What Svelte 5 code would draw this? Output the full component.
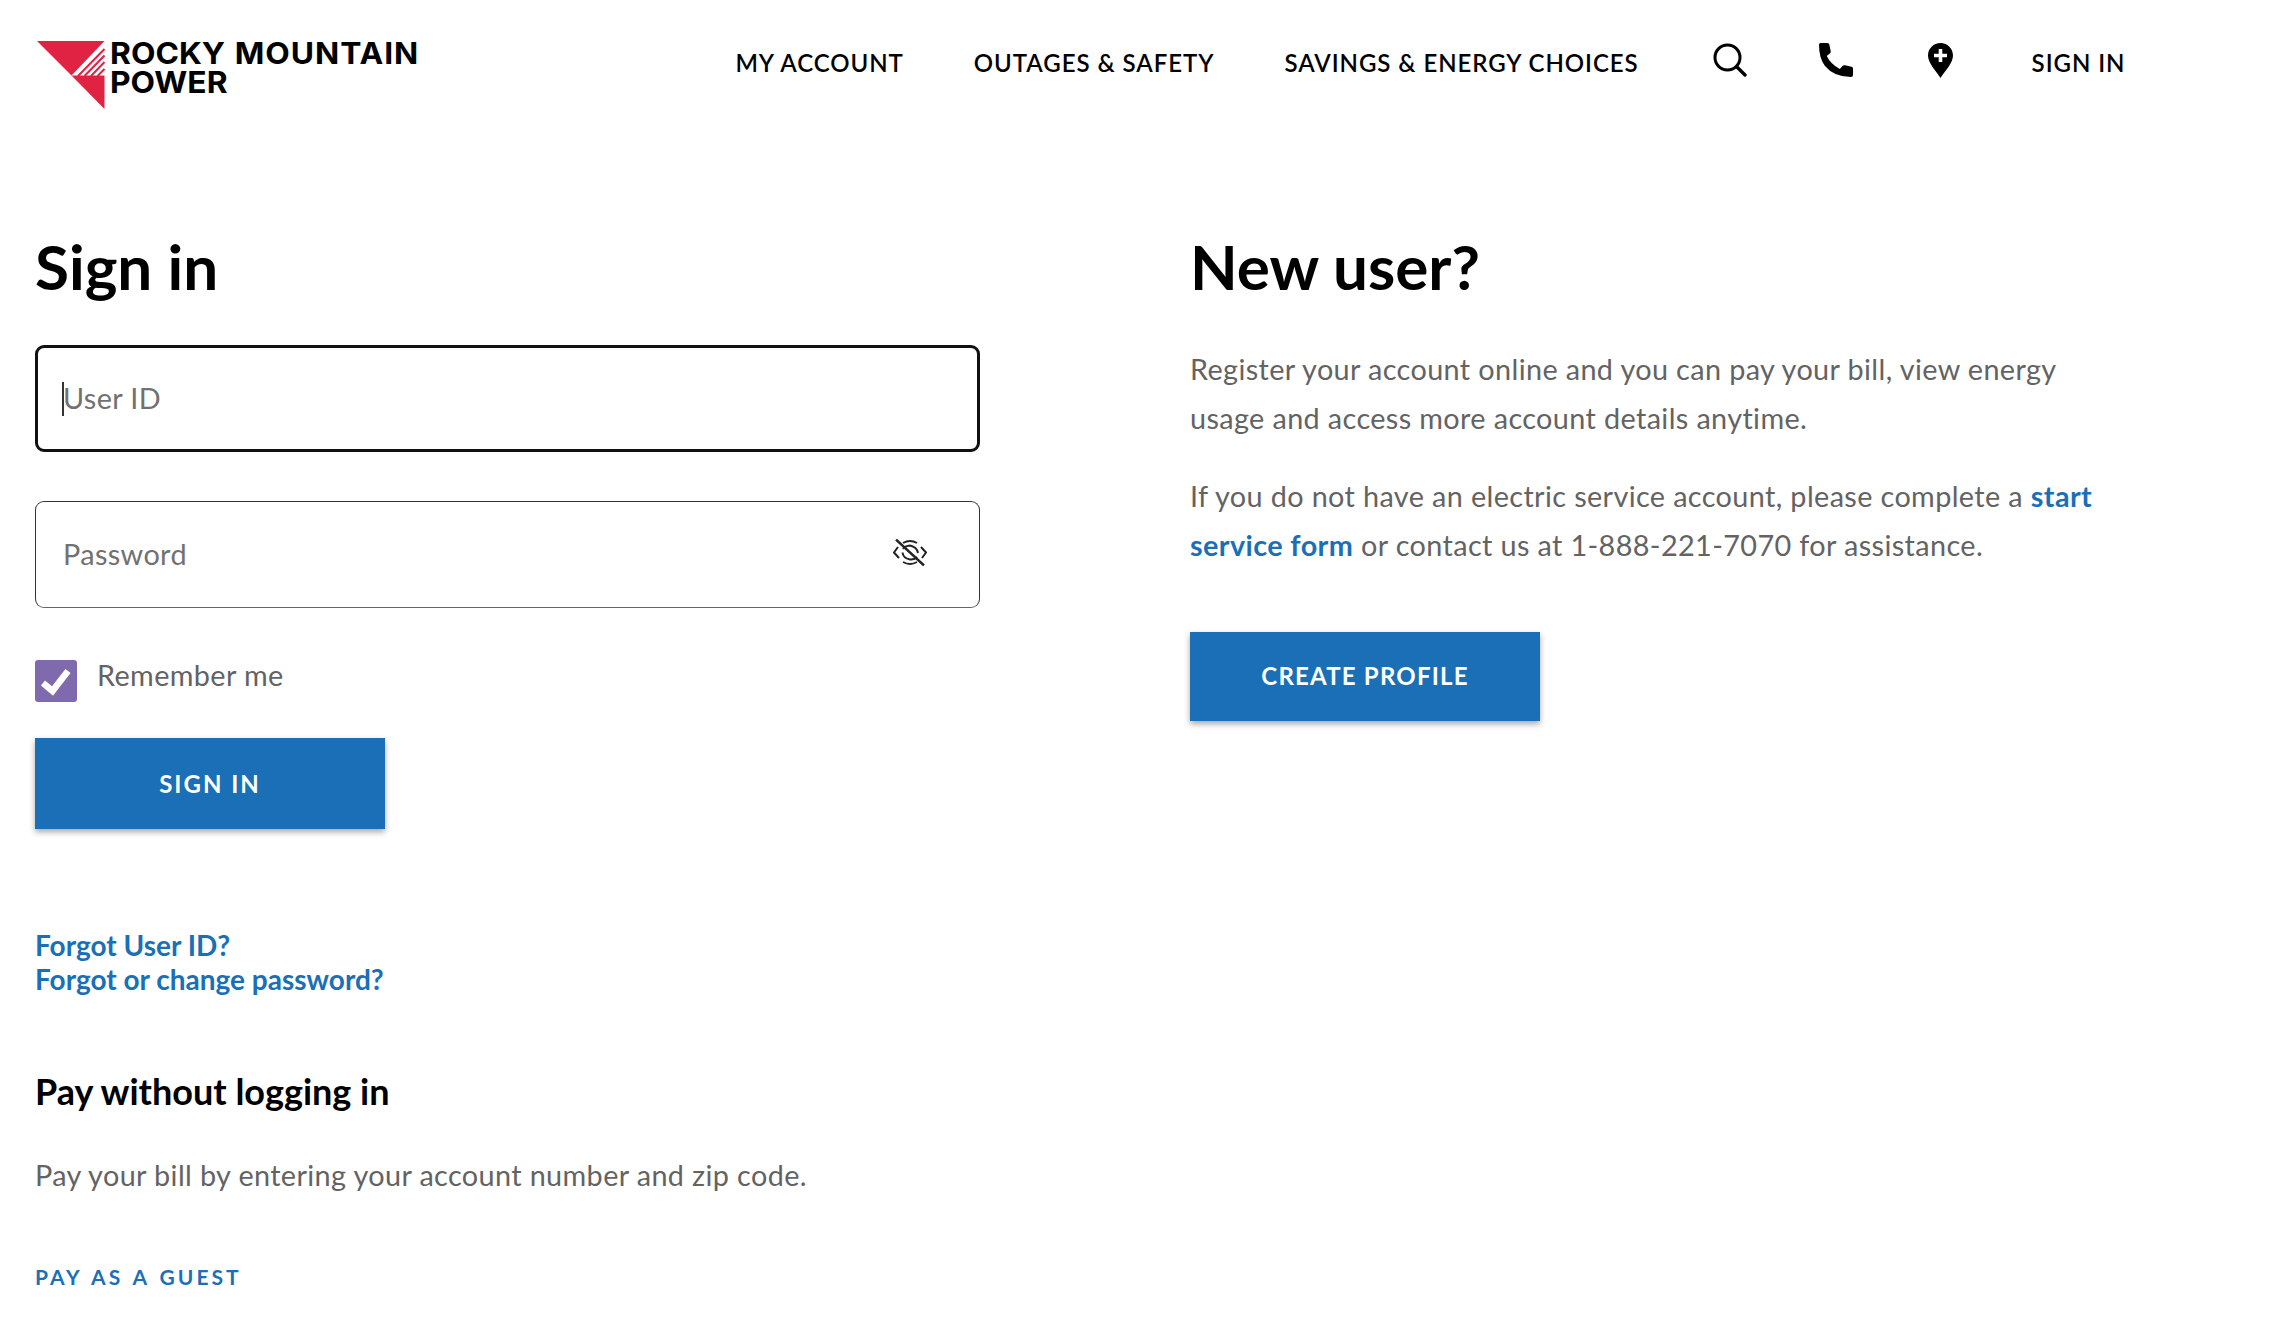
<script>
	const navLinks = ["MY ACCOUNT", "OUTAGES & SAFETY", "SAVINGS & ENERGY CHOICES"];
</script>

<header class="header">
	<a href="/" class="logo">
		<svg class="logoMark" viewBox="0 0 68 68" width="68" height="68" aria-hidden="true">
			<path d="M0 0H67.5L34.5 34.5Z" fill="#e02243" />
			<path d="M34.5 34.5H67.5V68Z" fill="#e02243" />
			<path d="M41 35L67.5 8M47.5 35L67.5 14.5M54 35L67.5 21M60.5 35L67.5 28" stroke="#e02243" stroke-width="2" fill="none" />
		</svg>
		<span class="logoText">ROCKY <span class="logoWide">MOUNTAIN</span><br />POWER</span>
	</a>
	<nav class="nav">
		{#each navLinks as link}
			<a href="/" class="navLink">{link}</a>
		{/each}
		<a href="/" class="navIcon search" aria-label="Search">
			<svg viewBox="0 0 34 34" width="34" height="34">
				<circle cx="14.5" cy="14.5" r="12.5" fill="none" stroke="#000" stroke-width="3" />
				<path d="M24 24L32 32" stroke="#000" stroke-width="3.4" stroke-linecap="round" />
			</svg>
		</a>
		<a href="/" class="navIcon phone" aria-label="Call">
			<svg viewBox="0 0 34 34" width="34" height="34">
				<path d="M1.5 0H8.5Q10 0 10.3 1.5L11.7 8Q12 9.5 10.8 10.5L7.8 13Q11.5 21 20.8 26L23.5 23Q24.5 22 26 22.3L32.5 23.7Q34 24 34 25.5V32Q34 34 32 34Q15 34 6 23Q0 15 0 2Q0 0 1.5 0Z" fill="#000" />
			</svg>
		</a>
		<a href="/" class="navIcon pin" aria-label="Locations">
			<svg viewBox="0 0 25 35" width="25" height="35">
				<path fill-rule="evenodd" d="M12.5 0C19.4 0 25 5.5 25 12.5C25 20 17 28 12.5 35C8 28 0 20 0 12.5C0 5.5 5.6 0 12.5 0ZM10.7 6V10.7H6V14.3H10.7V19H14.3V14.3H19V10.7H14.3V6Z" fill="#000" />
			</svg>
		</a>
		<a href="/" class="navLink signInLink">SIGN IN</a>
	</nav>
</header>

<main class="page">
	<section class="signIn">
		<h1>Sign in</h1>
		<div class="field focused">
			<span class="caret"></span>
			<span class="placeholder">User ID</span>
		</div>
		<div class="field">
			<span class="placeholder">Password</span>
			<svg class="eye" viewBox="0 0 34 27" width="34" height="27" fill="none" stroke="#222" stroke-width="2" aria-hidden="true">
				<path d="M5 8L1 13.5L6 19M10 23Q17 27 24 23M29 19L33 13.5L28 8M24 4Q17 0 10 4" />
				<path d="M10 10Q12 7 17 6.5Q24 8 25 14M24 18Q21 21 17 20.5Q10 19 9.5 13.5" />
				<path d="M3 0.5L31 26.5" stroke-width="2.4" />
			</svg>
		</div>
		<label class="remember">
			<span class="checkbox">
				<svg viewBox="0 0 42 42" width="42" height="42" aria-hidden="true">
					<path d="M8 23L17.5 31L33 11" fill="none" stroke="#fff" stroke-width="6.5" />
				</svg>
			</span>
			<span>Remember me</span>
		</label>
		<button class="btn signInBtn">SIGN IN</button>
		<div class="forgot">
			<a href="/">Forgot User ID?</a>
			<a href="/">Forgot or change password?</a>
		</div>
		<h2>Pay without logging in</h2>
		<p class="guestText">Pay your bill by entering your account number and zip code.</p>
		<a href="/" class="guestLink">PAY AS A GUEST</a>
	</section>

	<section class="newUser">
		<h1>New user?</h1>
		<p>Register your account online and you can pay your bill, view energy usage and access more account details anytime.</p>
		<p>If you do not have an electric service account, please complete a <a href="/">start service form</a> or contact us at 1-888-221-7070 for assistance.</p>
		<button class="btn createBtn">CREATE PROFILE</button>
	</section>
</main>

<style>
	:global(body) {
		background: #fff;
		font-family: Lato, "Open Sans", sans-serif;
		color: #000;
	}

	a {
		text-decoration: none;
	}

	.header {
		display: flex;
		align-items: flex-start;
		height: 228px;
		padding: 41px 149.5px 0 37px;
		box-sizing: border-box;
	}

	.logo {
		display: flex;
		color: #000;
	}

	.logoText {
		display: block;
		margin: -2px 0 0 5px;
		font-family: Inter, sans-serif;
		font-weight: 700;
		font-size: 30px;
		line-height: 28.5px;
		word-spacing: 2px;
		transform: scaleX(1.06);
		transform-origin: left;
		white-space: nowrap;
	}

	.logoWide {
		letter-spacing: 0.9px;
	}

	.nav {
		display: flex;
		align-items: center;
		gap: 70px;
		height: 40px;
		margin: 1px 0 0 auto;
	}

	.navLink {
		color: #000;
		font-size: 24px;
		font-weight: 600;
		letter-spacing: 0.95px;
		white-space: nowrap;
	}

	.navIcon {
		display: flex;
		margin-bottom: 4px;
	}

	.search {
		margin-left: 4px;
	}

	.phone {
		margin-left: 2px;
	}

	.pin {
		margin-left: 5px;
	}

	.signInLink {
		margin-left: 9px;
	}

	.page {
		display: flex;
		padding-left: 35px;
	}

	.signIn {
		width: 945px;
		margin-right: 210px;
	}

	.newUser {
		width: 920px;
		color: #636363;
	}

	h1 {
		margin: 0 0 41px;
		color: #000;
		font-size: 62px;
		font-weight: 700;
		line-height: 76px;
	}

	.field {
		display: flex;
		align-items: center;
		justify-content: space-between;
		position: relative;
		height: 107px;
		margin-bottom: 49px;
		padding: 0 52px 0 27px;
		box-sizing: border-box;
		border: 1px solid #333;
		border-bottom-color: #666;
		border-radius: 9px;
	}

	.focused {
		border: 3px solid #111;
		padding-left: 25px;
		justify-content: flex-start;
	}

	.caret {
		position: absolute;
		left: 24px;
		top: 34px;
		width: 2px;
		height: 34px;
		background: #333;
	}

	.placeholder {
		margin-bottom: 2px;
		color: #717171;
		font-size: 28.8px;
		letter-spacing: 0.38px;
	}

	.eye {
		margin-bottom: 5px;
	}

	.remember {
		display: flex;
		align-items: flex-start;
		gap: 20px;
		margin-top: 52px;
		color: #636363;
		font-size: 28.8px;
		line-height: 30px;
		letter-spacing: 0.38px;
	}

	.checkbox {
		display: block;
		width: 42px;
		height: 42px;
		background: #7f6aae;
		border-radius: 3px;
	}

	.btn {
		display: block;
		width: 350px;
		border: 0;
		background: #1a6fb7;
		color: #fff;
		font-family: inherit;
		font-size: 24px;
		font-weight: 700;
		letter-spacing: 1.2px;
		box-shadow: 0 3px 6px rgba(0, 0, 0, 0.35);
	}

	.signInBtn {
		height: 91px;
		margin-top: 36px;
		letter-spacing: 2px;
	}

	.createBtn {
		height: 89px;
		margin-top: 62px;
		padding-bottom: 3px;
	}

	.forgot {
		display: flex;
		flex-direction: column;
		margin-top: 98.5px;
		font-size: 28px;
		line-height: 34px;
		font-weight: 700;
	}

	.forgot a,
	.newUser a {
		color: #1a6fb7;
	}

	.newUser a {
		font-weight: 700;
	}

	h2 {
		margin: 73px 0 0;
		font-size: 36px;
		font-weight: 700;
		line-height: 44px;
	}

	.guestText {
		margin: 44px 0 0;
		color: #636363;
		font-size: 28.8px;
		line-height: 36px;
		letter-spacing: 0.38px;
	}

	.guestLink {
		display: block;
		margin-top: 71.5px;
		color: #1a6fb7;
		font-size: 21px;
		line-height: 26px;
		font-weight: 700;
		letter-spacing: 3px;
		word-spacing: 2px;
	}

	.newUser p {
		margin: 0 0 29px;
		font-size: 28.8px;
		line-height: 49px;
		letter-spacing: 0.38px;
	}
</style>
